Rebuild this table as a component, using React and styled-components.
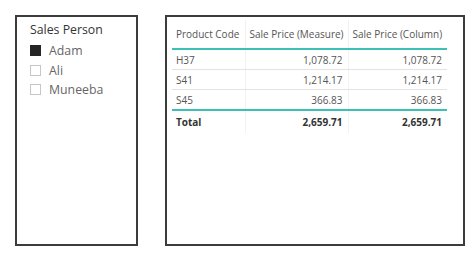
import React from "react";
import styled, { createGlobalStyle } from "styled-components";

const GlobalStyle = createGlobalStyle`
  html, body {
    margin: 0;
    background: #fff;
    font-family: "Open Sans", "Noto Sans", sans-serif;
  }
`;

const Page = styled.div`
  display: flex;
  align-items: flex-start;
  gap: 27px;
  padding: 15px 0 0 15px;
`;

const Panel = styled.div`
  box-sizing: border-box;
  width: ${(p) => p.w}px;
  height: 231px;
  border: 2px solid #3c3c3c;
  background: #fff;
`;

const Slicer = styled(Panel)`
  padding: 5px 0 0 13px;
`;

const SlicerTitle = styled.div`
  font-size: 12.3px;
  color: #333;
  line-height: 16px;
  margin-bottom: 3px;
`;

const Items = styled.div`
  display: flex;
  flex-direction: column;
`;

const Item = styled.div`
  display: flex;
  align-items: center;
  gap: 8px;
  height: 19.5px;
  font-size: 12.3px;
  color: #666;
`;

const Box = styled.span`
  box-sizing: border-box;
  width: 11px;
  height: 11px;
  flex: none;
  border: 1.5px solid ${(p) => (p.on ? "#252525" : "#c6c6c6")};
  background: ${(p) => (p.on ? "#252525" : "#fff")};
`;

const TablePanel = styled(Panel)`
  padding: 3px 0 0 5px;
`;

const Table = styled.table`
  border-collapse: collapse;
  width: 275px;
  table-layout: fixed;
  font-size: 10px;
  color: #555;
`;

const Th = styled.th`
  font-weight: normal;
  text-align: left;
  white-space: nowrap;
  height: 28px;
  padding: 0 4px;
  color: #555;
  border-bottom: 2px solid #3cbfb4;
  & + & {
    border-left: 1px solid #f0f0f0;
  }
`;

const Td = styled.td`
  height: 19px;
  padding: 0 ${(p) => (p.num ? 5 : 4)}px 0 4px;
  text-align: ${(p) => (p.num ? "right" : "left")};
  white-space: nowrap;
  border-bottom: 1px solid #e3e3e3;
  & + & {
    border-left: 1px solid #f2f2f2;
  }
`;

const TotalRow = styled.tr`
  td {
    font-weight: bold;
    color: #333;
    border-top: 2px solid #3cbfb4;
    border-bottom: none;
    height: 22px;
  }
`;

const people = [
  { name: "Adam", on: true },
  { name: "Ali", on: false },
  { name: "Muneeba", on: false },
];

const rows = [
  ["H37", "1,078.72", "1,078.72"],
  ["S41", "1,214.17", "1,214.17"],
  ["S45", "366.83", "366.83"],
];

export default function App() {
  return (
    <>
      <GlobalStyle />
      <Page>
        <Slicer w={123}>
          <SlicerTitle>Sales Person</SlicerTitle>
          <Items>
            {people.map((p) => (
              <Item key={p.name}>
                <Box on={p.on} />
                {p.name}
              </Item>
            ))}
          </Items>
        </Slicer>
        <TablePanel w={300}>
          <Table>
            <colgroup>
              <col style={{ width: 73 }} />
              <col style={{ width: 103 }} />
              <col style={{ width: 99 }} />
            </colgroup>
            <thead>
              <tr>
                <Th>Product Code</Th>
                <Th>Sale Price (Measure)</Th>
                <Th>Sale Price (Column)</Th>
              </tr>
            </thead>
            <tbody>
              {rows.map((r) => (
                <tr key={r[0]}>
                  <Td>{r[0]}</Td>
                  <Td num>{r[1]}</Td>
                  <Td num>{r[2]}</Td>
                </tr>
              ))}
              <TotalRow>
                <Td>Total</Td>
                <Td num>2,659.71</Td>
                <Td num>2,659.71</Td>
              </TotalRow>
            </tbody>
          </Table>
        </TablePanel>
      </Page>
    </>
  );
}
